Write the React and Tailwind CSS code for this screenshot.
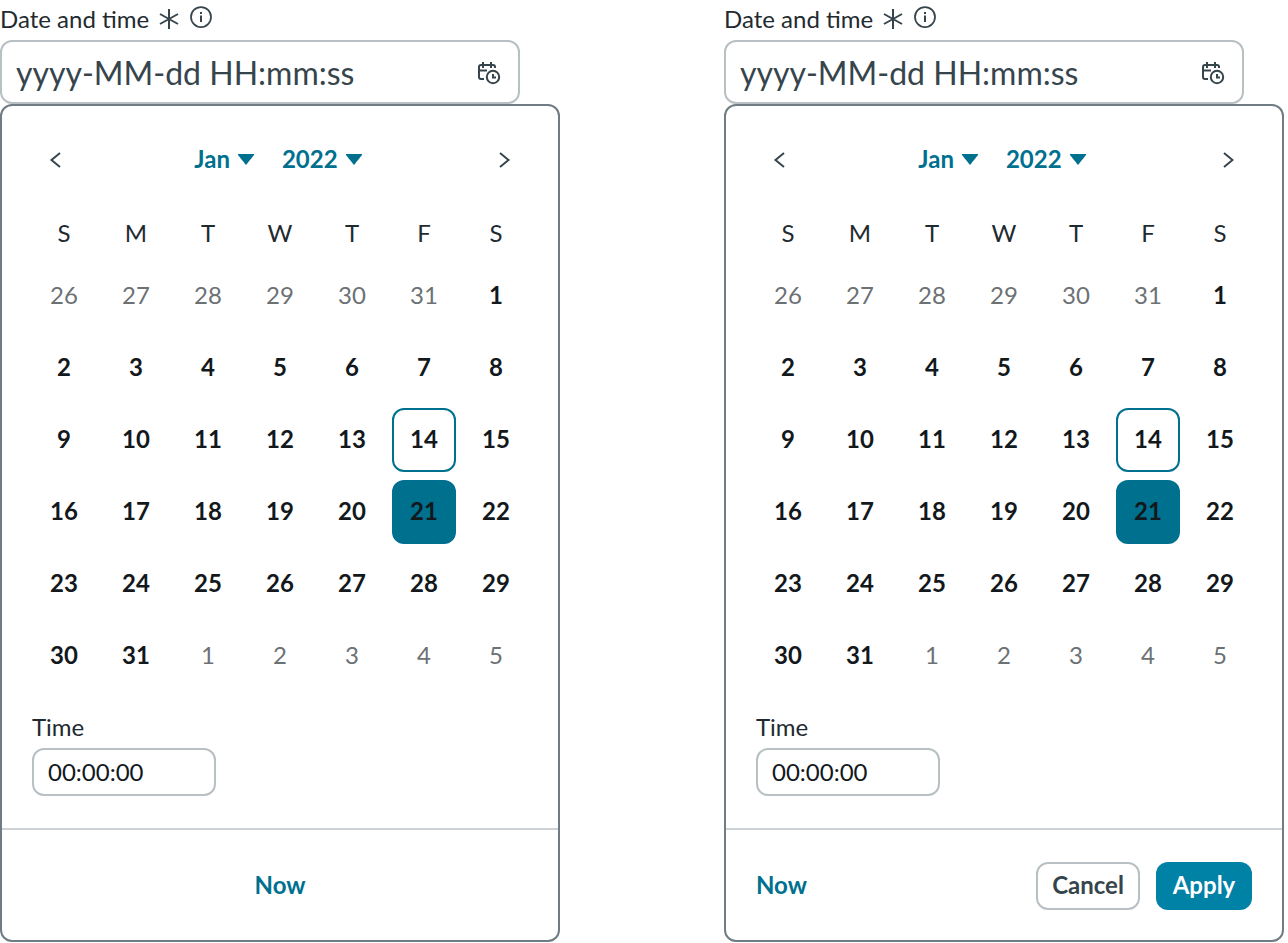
import React, { useId, useState } from "react";

const WEEKDAYS = [
  ["S", "Sunday"],
  ["M", "Monday"],
  ["T", "Tuesday"],
  ["W", "Wednesday"],
  ["T", "Thursday"],
  ["F", "Friday"],
  ["S", "Saturday"],
];
const MONTHS = ["Jan", "Feb", "Mar", "Apr", "May", "Jun", "Jul", "Aug", "Sep", "Oct", "Nov", "Dec"];
const YEARS = ["2021", "2022", "2023"];
const TODAY = 14;

// Six weeks starting on Sunday, 26 December 2021
const WEEKS = Array.from({ length: 6 }, (_, week) =>
  Array.from({ length: 7 }, (_, day) => {
    const offset = week * 7 + day - 5;
    if (offset < 1) return { day: offset + 31, outside: true };
    if (offset > 31) return { day: offset - 31, outside: true };
    return { day: offset, outside: false };
  })
);

function AsteriskIcon() {
  return (
    <svg width="20" height="20" viewBox="0 0 20 20" fill="none" stroke="#36454c" strokeWidth="2" aria-hidden="true">
      <path d="M10 0v20M1 5l18 10M19 5L1 15" />
    </svg>
  );
}

function InfoIcon() {
  return (
    <svg width="22" height="22" viewBox="0 0 22 22" fill="none" stroke="#36454c" aria-hidden="true">
      <circle cx="11" cy="11" r="10" strokeWidth="1.75" />
      <path d="M11 9.5V16" strokeWidth="2" />
      <path d="M11 6v2" strokeWidth="2" />
    </svg>
  );
}

function CalendarClockIcon() {
  return (
    <svg width="24" height="24" viewBox="0 0 24 24" fill="none" stroke="#36454c" strokeWidth="2" aria-hidden="true">
      <path d="M6 1v6M14 1v6" />
      <path d="M7 18H4a2 2 0 0 1-2-2V6a2 2 0 0 1 2-2H16a2 2 0 0 1 2 2v1" />
      <path d="M2 9.500H10" />
      <circle cx="16" cy="16" r="6.200" />
      <path d="M16 13v3.500h3" />
    </svg>
  );
}

function Chevron({ path }) {
  return (
    <svg width="14" height="16" viewBox="0 0 14 16" fill="none" stroke="#36454c" strokeWidth="2" aria-hidden="true">
      <path d={path} />
    </svg>
  );
}

function HeaderSelect({ label, options, value, onChange }) {
  return (
    <div className="relative flex items-center">
      <select
        aria-label={label}
        value={value}
        onChange={(e) => onChange(e.target.value)}
        className="field-sizing-content cursor-pointer appearance-none bg-transparent pr-6 pb-0.5 text-2xl leading-8 font-bold text-[#00708f]"
      >
        {options.map((option) => (
          <option key={option}>{option}</option>
        ))}
      </select>
      <svg className="pointer-events-none absolute right-0" width="16" height="12" viewBox="0 0 16 12" fill="#00708f" aria-hidden="true">
        <path d="M0 0H16V1L8 11L0 1Z" />
      </svg>
    </div>
  );
}

function dayClass(cell, selected) {
  if (cell.outside) return "text-[#6c7174]";
  if (cell.day === selected) return "bg-[#00708f] font-bold text-[#12181b]";
  if (cell.day === TODAY) return "border-2 border-[#00708f] font-bold text-[#12181b]";
  return "font-bold text-[#12181b]";
}

function DateTimePicker({ withActions }) {
  const id = useId();
  const [month, setMonth] = useState("Jan");
  const [year, setYear] = useState("2022");
  const [selected, setSelected] = useState(21);

  return (
    <section className="w-full max-w-[560px]">
      <div className="flex h-10 items-center gap-[11px] text-2xl text-[#1f2b30]">
        <label htmlFor={`${id}-date`} className="flex items-center gap-2.5 pb-0.5">
          Date and time
          <AsteriskIcon />
        </label>
        <button type="button" aria-label="More information" className="pb-1.5">
          <InfoIcon />
        </button>
      </div>

      <div className="flex h-16 max-w-[520px] items-center rounded-xl border-2 border-[#b8c0c4] px-3.5 pt-0.5">
        <input
          id={`${id}-date`}
          type="text"
          placeholder="yyyy-MM-dd HH:mm:ss"
          className="min-w-0 flex-1 bg-transparent text-[32px] leading-10 text-[#36454c] outline-none placeholder:text-[#36454c]"
        />
        <button type="button" aria-label="Open calendar" className="mr-[3px]">
          <CalendarClockIcon />
        </button>
      </div>

      <div className="rounded-xl border-2 border-[#6f7c83]">
        <div className="flex items-center justify-between px-[30px] pt-[30px]">
          <button type="button" aria-label="Previous month" className="flex size-12 items-center justify-center">
            <Chevron path="M11 1L2.500 8l8.500 7" />
          </button>
          <div className="flex items-center gap-7 pr-1">
            <HeaderSelect label="Month" options={MONTHS} value={month} onChange={setMonth} />
            <HeaderSelect label="Year" options={YEARS} value={year} onChange={setYear} />
          </div>
          <button type="button" aria-label="Next month" className="flex size-12 items-center justify-center">
            <Chevron path="M3 1L11.500 8l-8.500 7" />
          </button>
        </div>

        <div className="px-[26px] pt-6">
          <table className="w-full table-fixed border-collapse text-center text-2xl">
            <thead>
              <tr>
                {WEEKDAYS.map(([short, full]) => (
                  <th key={full} scope="col" abbr={full} className="h-[52px] p-0 pb-0.5 font-normal text-[#1f2b30]">
                    {short}
                  </th>
                ))}
              </tr>
            </thead>
            <tbody>
              {WEEKS.map((week, row) => (
                <tr key={row}>
                  {week.map((cell, col) => (
                    <td key={col} className="p-1">
                      <button
                        type="button"
                        onClick={() => !cell.outside && setSelected(cell.day)}
                        className={`flex h-16 w-full items-center justify-center rounded-xl pb-0.5 ${dayClass(cell, selected)}`}
                      >
                        {cell.day}
                      </button>
                    </td>
                  ))}
                </tr>
              ))}
            </tbody>
          </table>
        </div>

        <div className="flex flex-col items-start gap-1 px-[30px] pt-5 pb-8 text-2xl">
          <label htmlFor={`${id}-time`} className="pb-0.5 leading-[30px] text-[#1f2b30]">
            Time
          </label>
          <input
            id={`${id}-time`}
            type="text"
            defaultValue="00:00:00"
            className="h-12 w-46 rounded-xl border-2 border-[#b8c0c4] px-3.5 pb-0.5 text-[#12181b]"
          />
        </div>

        <div
          className={`flex items-center border-t-2 border-[#ccd2d5] px-[30px] pt-8 pb-[30px] text-2xl font-bold ${
            withActions ? "justify-between" : "justify-center"
          }`}
        >
          <button type="button" className="h-12 pb-0.5 text-[#00708f]">
            Now
          </button>
          {withActions && (
            <div className="flex gap-4">
              <button type="button" className="h-12 min-w-[104px] rounded-xl border-2 border-[#b8c0c4] px-3.5 pb-0.5 text-[#36454c]">
                Cancel
              </button>
              <button type="button" className="h-12 min-w-24 rounded-xl bg-[#0081a6] px-4 pb-0.5 text-white">
                Apply
              </button>
            </div>
          )}
        </div>
      </div>
    </section>
  );
}

export default function App() {
  return (
    <main className="flex justify-between gap-10 bg-white pr-1 font-['Lato',sans-serif]">
      <DateTimePicker withActions={false} />
      <DateTimePicker withActions />
    </main>
  );
}
